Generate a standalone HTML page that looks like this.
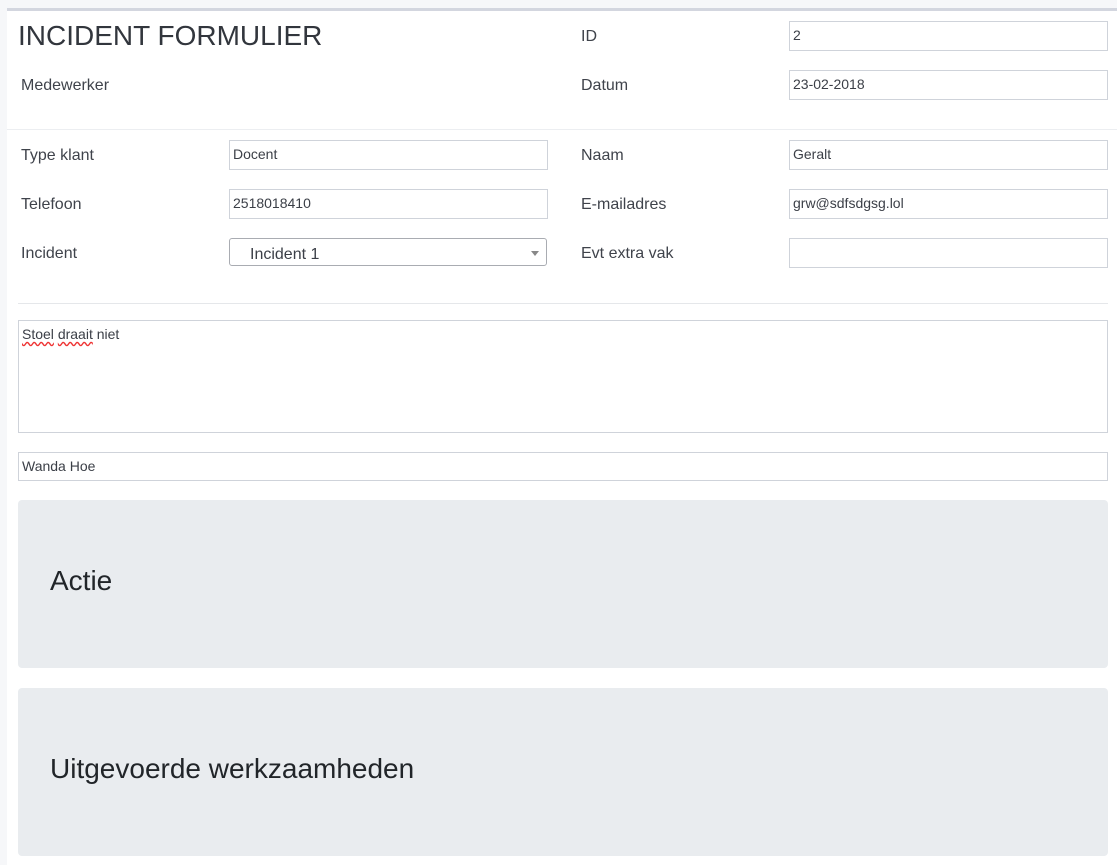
<!DOCTYPE html>
<html><head><meta charset="utf-8"><style>
*{box-sizing:border-box;margin:0;padding:0}
body{width:1117px;height:865px;background:#f6f7f9;font-family:"Liberation Sans",sans-serif;color:#3b3f47;position:relative;overflow:hidden}
.card{position:absolute;left:7px;top:8px;width:1110px;height:857px;background:#fff;border-top:3px solid #d3d6df}
.a{position:absolute}
.lbl{font-size:16px;color:#3f434b;margin-top:1px}
.in{position:absolute;border:1px solid #cfd3da;background:#fff;font-size:14px;padding-left:3px;line-height:27px;height:30px;color:#3b3f47}
.hr{position:absolute;left:7px;height:1px;background:#eceef1}
.jb{position:absolute;left:18px;width:1090px;height:168px;background:#e9ecef;border-radius:4px;font-size:28px;color:#212529;padding-left:32px}
</style></head><body>
<div class="card"></div>
<div class="a" style="left:18px;top:20px;font-size:28px;color:#32363d">INCIDENT FORMULIER</div>
<div class="a lbl" style="left:21px;top:76px">Medewerker</div>
<div class="a lbl" style="left:581px;top:27px">ID</div>
<div class="a lbl" style="left:581px;top:76px">Datum</div>
<div class="in" style="left:789px;top:21px;width:319px">2</div>
<div class="in" style="left:789px;top:70px;width:319px">23-02-2018</div>
<div class="hr" style="top:129px;width:1110px"></div>
<div class="a lbl" style="left:21px;top:146px">Type klant</div>
<div class="a lbl" style="left:21px;top:195px">Telefoon</div>
<div class="a lbl" style="left:21px;top:244px">Incident</div>
<div class="in" style="left:229px;top:140px;width:319px">Docent</div>
<div class="in" style="left:229px;top:189px;width:319px">2518018410</div>
<div class="in" style="left:229px;top:238px;width:318px;height:28px;border-color:#a9acb2;border-radius:3px;font-size:16px;padding-left:20px;line-height:31px">Incident 1<span style="position:absolute;right:7px;top:12px;width:0;height:0;border-left:4px solid transparent;border-right:4px solid transparent;border-top:5px solid #888"></span></div>
<div class="a lbl" style="left:581px;top:146px">Naam</div>
<div class="a lbl" style="left:581px;top:195px">E-mailadres</div>
<div class="a lbl" style="left:581px;top:244px">Evt extra vak</div>
<div class="in" style="left:789px;top:140px;width:319px">Geralt</div>
<div class="in" style="left:789px;top:189px;width:319px">grw@sdfsdgsg.lol</div>
<div class="in" style="left:789px;top:238px;width:319px"></div>
<div class="hr" style="left:18px;top:303px;width:1090px;background:#e5e7ea"></div>
<div class="in" style="left:18px;top:320px;width:1090px;height:113px;line-height:26px"><span style="text-decoration:underline wavy #e33;text-underline-offset:2px">Stoel</span> <span style="text-decoration:underline wavy #e33;text-underline-offset:2px">draait</span> niet</div>
<div class="in" style="left:18px;top:452px;width:1090px;height:29px;line-height:27px">Wanda Hoe</div>
<div class="jb" style="top:500px;line-height:162px">Actie</div>
<div class="jb" style="top:688px;line-height:162px">Uitgevoerde werkzaamheden</div>
</body></html>
